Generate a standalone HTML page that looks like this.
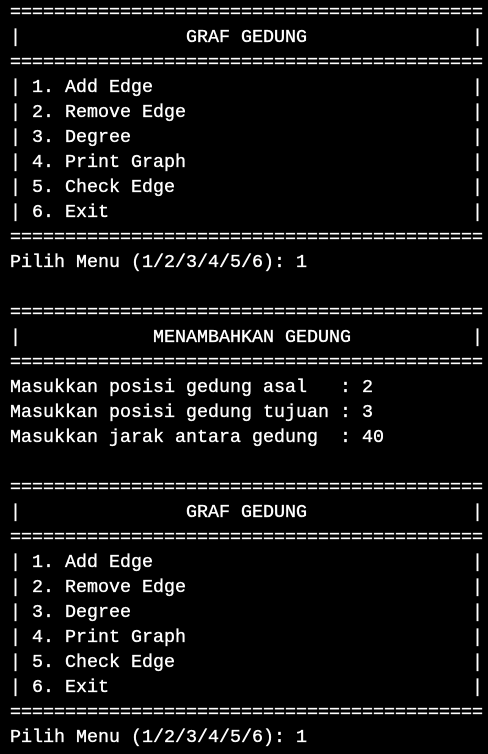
<!DOCTYPE html>
<html><head><style>
html,body{margin:0;padding:0;background:#000;width:488px;height:754px;overflow:hidden}
pre{margin:0;padding:0 0 0 10px;font-family:"Liberation Mono",monospace;font-size:18.33px;line-height:25px;color:#fff;white-space:pre;-webkit-text-stroke:0.35px #fff}
</style></head><body><pre>===========================================
|               GRAF GEDUNG               |
===========================================
| 1. Add Edge                             |
| 2. Remove Edge                          |
| 3. Degree                               |
| 4. Print Graph                          |
| 5. Check Edge                           |
| 6. Exit                                 |
===========================================
Pilih Menu (1/2/3/4/5/6): 1

===========================================
|            MENAMBAHKAN GEDUNG           |
===========================================
Masukkan posisi gedung asal   : 2
Masukkan posisi gedung tujuan : 3
Masukkan jarak antara gedung  : 40

===========================================
|               GRAF GEDUNG               |
===========================================
| 1. Add Edge                             |
| 2. Remove Edge                          |
| 3. Degree                               |
| 4. Print Graph                          |
| 5. Check Edge                           |
| 6. Exit                                 |
===========================================
Pilih Menu (1/2/3/4/5/6): 1</pre></body></html>
